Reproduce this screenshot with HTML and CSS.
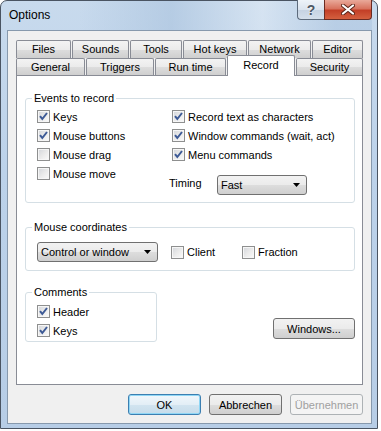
FILE: index.html
```html
<!DOCTYPE html>
<html lang="en">
<head>
    <meta charset="UTF-8">
    <title>Options</title>
    <link rel="stylesheet" href="styles.css">
</head>
<body>
    <div class="window">
        <div class="titlebar">
            <span class="title">Options</span>
            <div class="caption-buttons">
                <span class="cap help">?</span>
                <span class="cap close">
                    <svg width="14" height="11" viewBox="0 0 14 11"><path d="M2 1.5 L12 9.5 M12 1.5 L2 9.5" stroke="#5a2418" stroke-width="4" stroke-linecap="round"/><path d="M2 1.5 L12 9.5 M12 1.5 L2 9.5" stroke="#fff" stroke-width="2.2" stroke-linecap="round"/></svg>
                </span>
            </div>
        </div>

        <div class="client">
            <div class="tabs">
                <div class="tab-row back">
                    <span class="tab w-files">Files</span>
                    <span class="tab w-sounds">Sounds</span>
                    <span class="tab w-tools">Tools</span>
                    <span class="tab w-hotkeys">Hot keys</span>
                    <span class="tab w-network">Network</span>
                    <span class="tab w-editor">Editor</span>
                </div>
                <div class="tab-row front">
                    <span class="tab w-general">General</span>
                    <span class="tab w-triggers">Triggers</span>
                    <span class="tab w-runtime">Run time</span>
                    <span class="tab w-record selected">Record</span>
                    <span class="tab w-security">Security</span>
                </div>
            </div>

            <div class="panel">
                <fieldset class="group events">
                    <legend>Events to record</legend>
                    <div class="events-cols">
                        <div class="col left">
                            <label class="check"><span class="box on"><svg width="11" height="11" viewBox="0 0 11 11"><path d="M2 5.2 L4.3 8 L9 2" fill="none" stroke="#3d5a96" stroke-width="2"/></svg></span>Keys</label>
                            <label class="check"><span class="box on"><svg width="11" height="11" viewBox="0 0 11 11"><path d="M2 5.2 L4.3 8 L9 2" fill="none" stroke="#3d5a96" stroke-width="2"/></svg></span>Mouse buttons</label>
                            <label class="check"><span class="box"></span>Mouse drag</label>
                            <label class="check"><span class="box"></span>Mouse move</label>
                        </div>
                        <div class="col right">
                            <label class="check"><span class="box on"><svg width="11" height="11" viewBox="0 0 11 11"><path d="M2 5.2 L4.3 8 L9 2" fill="none" stroke="#3d5a96" stroke-width="2"/></svg></span>Record text as characters</label>
                            <label class="check"><span class="box on"><svg width="11" height="11" viewBox="0 0 11 11"><path d="M2 5.2 L4.3 8 L9 2" fill="none" stroke="#3d5a96" stroke-width="2"/></svg></span>Window commands (wait, act)</label>
                            <label class="check"><span class="box on"><svg width="11" height="11" viewBox="0 0 11 11"><path d="M2 5.2 L4.3 8 L9 2" fill="none" stroke="#3d5a96" stroke-width="2"/></svg></span>Menu commands</label>
                            <div class="timing">
                                <span class="timing-label">Timing</span>
                                <span class="combo timing-combo">Fast<svg width="7" height="4" viewBox="0 0 7 4"><path d="M0 0 H7 L3.5 4 Z" fill="#000"/></svg></span>
                            </div>
                        </div>
                    </div>
                </fieldset>

                <fieldset class="group coords">
                    <legend>Mouse coordinates</legend>
                    <div class="coords-row">
                        <span class="combo coords-combo">Control or window<svg width="7" height="4" viewBox="0 0 7 4"><path d="M0 0 H7 L3.5 4 Z" fill="#000"/></svg></span>
                        <label class="check client-check"><span class="box"></span>Client</label>
                        <label class="check"><span class="box"></span>Fraction</label>
                    </div>
                </fieldset>

                <div class="bottom-row">
                    <fieldset class="group comments">
                        <legend>Comments</legend>
                        <label class="check"><span class="box on"><svg width="11" height="11" viewBox="0 0 11 11"><path d="M2 5.2 L4.3 8 L9 2" fill="none" stroke="#3d5a96" stroke-width="2"/></svg></span>Header</label>
                        <label class="check"><span class="box on"><svg width="11" height="11" viewBox="0 0 11 11"><path d="M2 5.2 L4.3 8 L9 2" fill="none" stroke="#3d5a96" stroke-width="2"/></svg></span>Keys</label>
                    </fieldset>
                    <button class="btn windows-btn">Windows...</button>
                </div>
            </div>

            <div class="dialog-buttons">
                <button class="btn default">OK</button>
                <button class="btn">Abbrechen</button>
                <button class="btn disabled">Übernehmen</button>
            </div>
        </div>
    </div>
</body>
</html>
```

FILE: styles.css
```css
body {
    margin: 0;
    background-color: #fff;
    font-family: 'Liberation Sans', Arial, sans-serif;
    font-size: 11px;
    color: #000;
}
.window {
    width: 378px;
    box-sizing: border-box;
    border: 1px solid #4a5462;
    border-radius: 7px 7px 0 0;
    padding: 0 5px 4px 6px;
    background: linear-gradient(180deg, #c8daed 0%, #bcd2ea 40%, #b7cde6 100%);
}
.titlebar {
    height: 29px;
    display: flex;
    justify-content: space-between;
    align-items: flex-start;
    background: linear-gradient(90deg, rgba(255,255,255,0) 20%, rgba(170,195,222,0.6) 45%, rgba(255,255,255,0.25) 70%, rgba(170,195,222,0.5) 90%);
}
.title {
    font-size: 12px;
    line-height: 29px;
    padding-left: 2px;
}
.caption-buttons {
    display: flex;
    margin-top: -1px;
}
.cap {
    height: 20px;
    box-sizing: border-box;
    border: 1px solid #5d6b7c;
    border-top: none;
    display: flex;
    align-items: center;
    justify-content: center;
}
.help {
    width: 27px;
    border-radius: 0 0 0 4px;
    border-right: none;
    background: linear-gradient(180deg, #eef3f9 0%, #dbe4ef 50%, #c5d2e2 51%, #d4dfeb 100%);
    color: #4d5866;
    font-size: 14px;
    font-weight: bold;
    text-shadow: 0 0 2px #fff;
}
.close {
    width: 48px;
    border-color: #6a2b22;
    border-radius: 0 0 4px 0;
    background: linear-gradient(180deg, #e9a99a 0%, #d8735f 45%, #c33f27 55%, #d4603f 100%);
}
.client {
    background-color: #f0f0f0;
    border: 1px solid #8799ad;
    padding: 9px 8px 8px 8px;
}
.tab-row {
    display: flex;
    gap: 1px;
}
.tab-row.back {
    height: 18px;
}
.tab-row.front {
    height: 17px;
}
.tab {
    box-sizing: border-box;
    border: 1px solid #898c95;
    border-bottom: none;
    border-radius: 2px 2px 0 0;
    background: linear-gradient(180deg, #f3f3f3 0%, #ebebeb 50%, #dddddd 51%, #cfcfcf 100%);
    text-align: center;
    line-height: 17px;
}
.tab.selected {
    position: relative;
    z-index: 1;
    height: 21px;
    margin-top: -3px;
    background: #fff;
    line-height: 19px;
}
.w-files { width: 55px; }
.w-sounds { width: 57px; }
.w-tools { width: 52px; }
.w-hotkeys { width: 64px; }
.w-network { width: 63px; }
.w-editor { width: 51px; }
.w-general { width: 69px; }
.w-triggers { width: 68px; }
.w-runtime { width: 71px; }
.w-record { width: 68px; }
.w-security { width: 67px; }
.panel {
    box-sizing: border-box;
    height: 310px;
    width: 347px;
    border: 1px solid #898c95;
    background-color: #fff;
    padding: 15px 7px 0 8px;
}
.group {
    margin: 0;
    border: 1px solid #d5dfe5;
    border-radius: 3px;
    padding: 2px 0 0 11px;
}
.group legend {
    line-height: 14px;
    padding: 0 2px;
    margin-left: -5px;
}
.events {
    padding-bottom: 7px;
}
.events-cols {
    display: flex;
}
.col.left {
    width: 135px;
}
.check {
    display: flex;
    align-items: center;
    gap: 3px;
    height: 19px;
    white-space: nowrap;
}
.box {
    width: 13px;
    height: 13px;
    box-sizing: border-box;
    border: 1px solid #8e8f8f;
    background: linear-gradient(135deg, #d2d5da 0%, #eaeaea 50%, #fbfbfb 100%);
    box-shadow: inset 0 0 0 1px #f6f6f6;
    display: flex;
    align-items: center;
    justify-content: center;
}
.box svg {
    display: block;
}
.timing {
    display: flex;
    align-items: center;
    margin-top: 11px;
    height: 20px;
}
.timing-label {
    margin-left: -3px;
    width: 48px;
    margin-top: -4px;
}
.combo {
    box-sizing: border-box;
    display: flex;
    align-items: center;
    justify-content: space-between;
    border: 1px solid #707070;
    border-radius: 3px;
    background: linear-gradient(180deg, #f2f2f2 0%, #ebebeb 50%, #dddddd 51%, #cfcfcf 100%);
    padding: 0 6px 0 3px;
}
.timing-combo {
    width: 90px;
    height: 20px;
}
.coords {
    margin-top: 17px;
    padding-top: 8px;
    padding-bottom: 8px;
}
.coords-row {
    display: flex;
    align-items: center;
}
.coords-combo {
    width: 121px;
    height: 20px;
    margin-right: 13px;
}
.client-check {
    width: 71px;
}
.bottom-row {
    display: flex;
    justify-content: space-between;
    align-items: flex-end;
    margin-top: 14px;
}
.comments {
    width: 132px;
    box-sizing: border-box;
    padding-top: 3px;
    padding-bottom: 1px;
}
.btn {
    font-family: 'Liberation Sans', Arial, sans-serif;
    font-size: 11px;
    color: #000;
    box-sizing: border-box;
    height: 21px;
    border: 1px solid #707070;
    border-radius: 3px;
    background: linear-gradient(180deg, #f2f2f2 0%, #ebebeb 50%, #dddddd 51%, #cfcfcf 100%);
    padding: 0;
}
.windows-btn {
    width: 82px;
    margin-bottom: 3px;
}
.dialog-buttons {
    display: flex;
    justify-content: flex-end;
    gap: 8px;
    margin-top: 9px;
}
.dialog-buttons .btn {
    width: 73px;
}
.btn.default {
    border-color: #3c7fb1;
    box-shadow: inset 0 0 0 1px #8fd6f5;
    background: linear-gradient(180deg, #f1f7fb 0%, #e3eef6 50%, #d2e4f0 51%, #c6dcea 100%);
}
.btn.disabled {
    border-color: #adb2b5;
    background: #f4f4f4;
    color: #a0a0a0;
}
```
